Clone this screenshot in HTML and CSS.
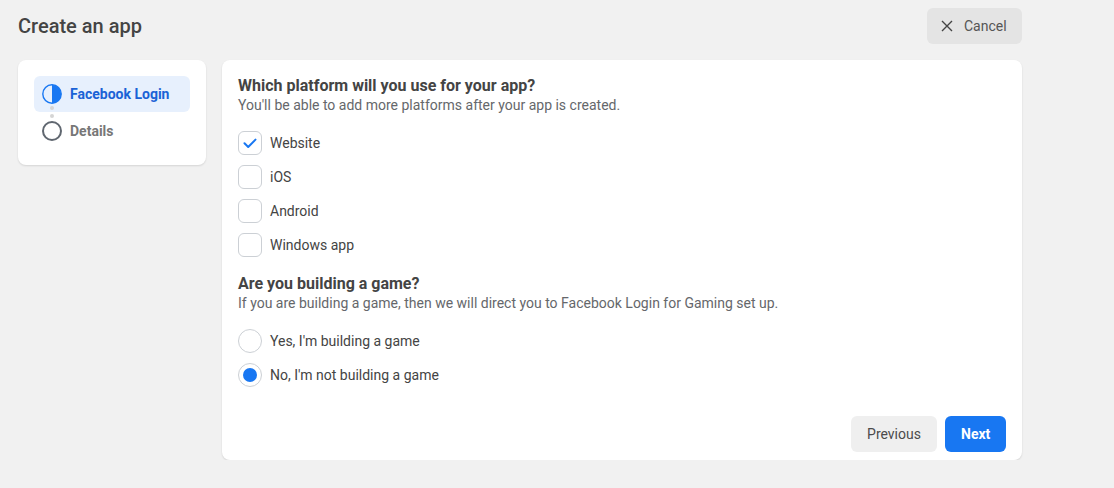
FILE: index.html
```html
<!DOCTYPE html>
<html>
<head>
<meta charset="utf-8">
<link rel="stylesheet" href="styles.css">
</head>
<body>
<div class="page">
  <div class="header">
    <h1 class="title">Create an app</h1>
    <button class="cancel">
      <svg width="12" height="12" viewBox="0 0 12 12"><path d="M1 1 L11 11 M11 1 L1 11" stroke="#444" stroke-width="1.4" fill="none"/></svg>
      <span>Cancel</span>
    </button>
  </div>
  <div class="main">
    <div class="steps-card">
      <div class="steps">
        <div class="step active">
          <svg class="step-icon" width="20" height="20" viewBox="0 0 20 20"><circle cx="10" cy="10" r="9.2" fill="none" stroke="#1877f2" stroke-width="1.4"/><path d="M10 0.8 A9.2 9.2 0 0 1 10 19.2 Z" fill="#1877f2"/></svg>
          <span>Facebook Login</span>
        </div>
        <div class="connector"><i></i><i></i></div>
        <div class="step">
          <svg class="step-icon" width="20" height="20" viewBox="0 0 20 20"><circle cx="10" cy="10" r="9" fill="none" stroke="#606770" stroke-width="2"/></svg>
          <span>Details</span>
        </div>
      </div>
    </div>
    <div class="form-card">
      <h2 class="q">Which platform will you use for your app?</h2>
      <p class="hint">You'll be able to add more platforms after your app is created.</p>
      <div class="options">
        <label class="opt"><span class="box checked"><svg width="16" height="16" viewBox="0 0 16 16"><path d="M2.5 8.3 L6.2 12 L13.5 4.6" stroke="#1877f2" stroke-width="2" fill="none" stroke-linecap="round" stroke-linejoin="round"/></svg></span>Website</label>
        <label class="opt"><span class="box"></span>iOS</label>
        <label class="opt"><span class="box"></span>Android</label>
        <label class="opt"><span class="box"></span>Windows app</label>
      </div>
      <h2 class="q q2">Are you building a game?</h2>
      <p class="hint">If you are building a game, then we will direct you to Facebook Login for Gaming set up.</p>
      <div class="options radios">
        <label class="opt"><span class="radio"></span>Yes, I'm building a game</label>
        <label class="opt"><span class="radio on"></span>No, I'm not building a game</label>
      </div>
      <div class="footer">
        <button class="btn prev">Previous</button>
        <button class="btn next">Next</button>
      </div>
    </div>
  </div>
</div>
</body>
</html>
```
FILE: styles.css
```css
* { box-sizing: border-box; }
body {
  margin: 0;
  background: #f1f1f1;
  font-family: Roboto, "Liberation Sans", sans-serif;
  color: #444950;
}
.page {
  width: 1022px;
  padding: 8px 0 0 18px;
}
.header {
  display: flex;
  align-items: center;
  justify-content: space-between;
  height: 36px;
}
.title {
  margin: 0;
  font-size: 20px;
  font-weight: 500;
  color: #444;
}
.cancel {
  display: flex;
  align-items: center;
  gap: 11px;
  height: 36px;
  width: 95px;
  padding: 0 14px;
  border: none;
  border-radius: 6px;
  background: #e4e4e4;
  font-family: inherit;
  font-size: 14px;
  color: #555;
}
.main {
  display: flex;
  gap: 16px;
  margin-top: 16px;
  align-items: flex-start;
}
.steps-card {
  width: 188px;
  background: #fff;
  border-radius: 8px;
  box-shadow: 0 1px 2px rgba(0,0,0,0.12);
  padding: 16px;
}
.steps { position: relative; }
.step {
  display: flex;
  align-items: center;
  gap: 8px;
  height: 36px;
  padding-left: 8px;
  border-radius: 6px;
  font-size: 14px;
  font-weight: 700;
  color: #777;
}
.step.active {
  background: #e7f0fd;
  color: #1a62d6;
  padding-bottom: 1px;
}
.connector {
  position: absolute;
  left: 16px;
  top: 30px;
  display: flex;
  flex-direction: column;
  gap: 4px;
}
.connector i {
  display: block;
  width: 4px;
  height: 4px;
  border-radius: 50%;
  background: #d5d5d5;
}
.steps .step + .connector + .step { margin-top: 1px; }
.form-card {
  width: 800px;
  background: #fff;
  border-radius: 8px;
  box-shadow: 0 1px 2px rgba(0,0,0,0.12);
  padding: 16px 16px 8px;
}
.q {
  margin: 0;
  font-size: 16px;
  line-height: 20px;
  font-weight: 700;
  color: #444;
}
.q2 { margin-top: 17px; }
.hint {
  margin: 0;
  font-size: 14px;
  line-height: 18px;
  color: #65676b;
}
.options {
  display: flex;
  flex-direction: column;
  gap: 10px;
  margin-top: 17px;
}
.opt {
  display: flex;
  align-items: center;
  gap: 8px;
  height: 24px;
  font-size: 14px;
  color: #444;
}
.box {
  width: 24px;
  height: 24px;
  border: 1px solid #ccd0d5;
  border-radius: 6px;
  display: flex;
  align-items: center;
  justify-content: center;
}
.radio {
  width: 24px;
  height: 24px;
  border: 1px solid #ccd0d5;
  border-radius: 50%;
  display: flex;
  align-items: center;
  justify-content: center;
}
.radio.on::after {
  content: "";
  width: 14px;
  height: 14px;
  border-radius: 50%;
  background: #1877f2;
}
.footer {
  display: flex;
  justify-content: flex-end;
  gap: 8px;
  margin-top: 29px;
}
.btn {
  height: 36px;
  border: none;
  border-radius: 6px;
  font-family: inherit;
  font-size: 14px;
  padding: 0 16px;
}
.prev { background: #efefef; color: #4b4b4b; width: 86px; }
.next { background: #1877f2; color: #fff; font-weight: 700; width: 61px; }
```
